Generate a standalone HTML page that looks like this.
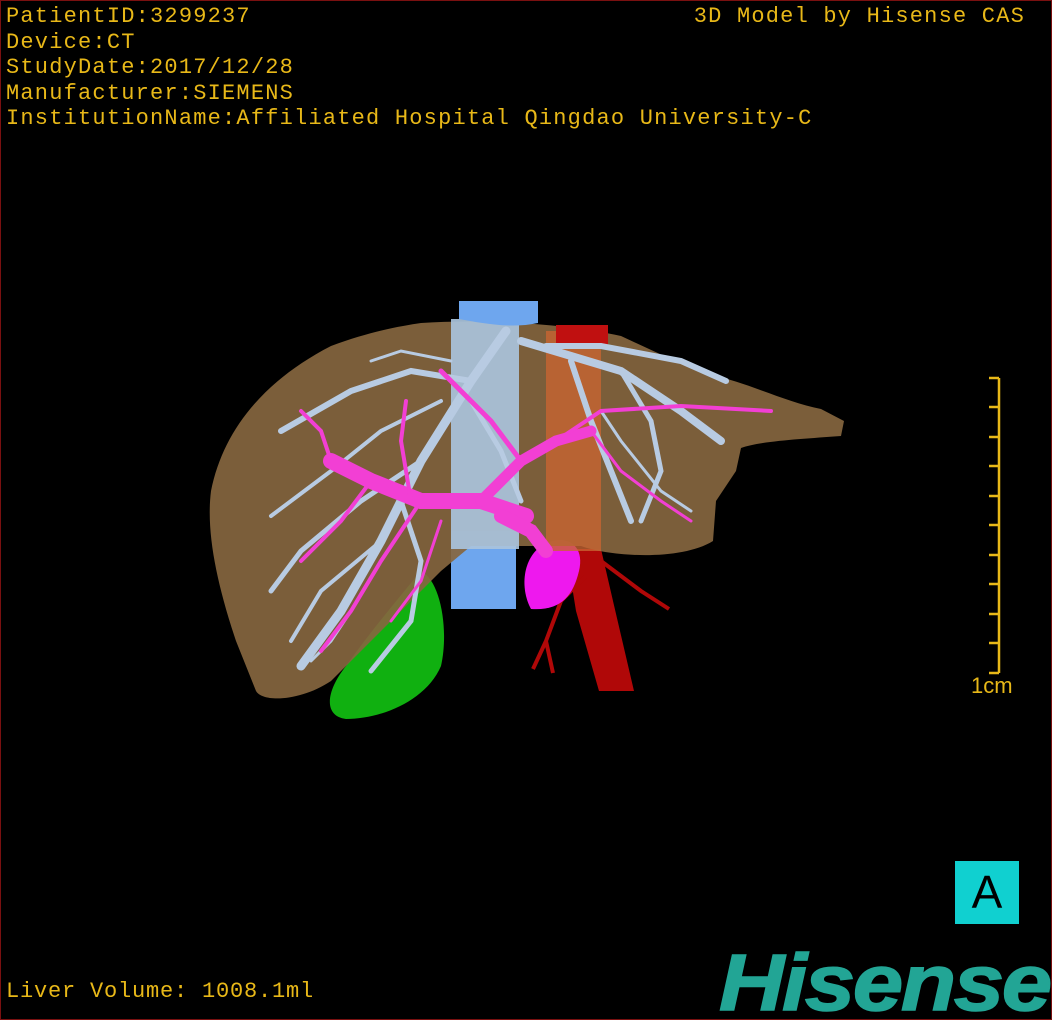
<!DOCTYPE html>
<html><head><meta charset="utf-8"><style>
html,body{margin:0;padding:0;background:#000;}
#w{position:relative;width:1050px;height:1018px;border:1px solid #7a1010;overflow:hidden;background:#000;}
.t{position:absolute;color:#e8b818;font-family:"Liberation Mono",monospace;font-size:22px;letter-spacing:1.2px;white-space:nowrap;line-height:25px;}
#logo{position:absolute;left:718px;top:940px;color:#22a595;font-family:"Liberation Sans",sans-serif;font-weight:bold;font-style:italic;font-size:80px;letter-spacing:-2px;transform:scaleX(1.13);transform-origin:left top;line-height:84px;-webkit-text-stroke:1.5px #22a595;}
#A{position:absolute;left:954px;top:860px;width:64px;height:63px;background:#10d0d0;color:#000;font-family:"Liberation Sans",sans-serif;font-size:46px;text-align:center;line-height:63px;}
</style></head><body><div id="w">
<div class="t" style="left:5px;top:3px">PatientID:3299237</div>
<div class="t" style="left:5px;top:29px">Device:CT</div>
<div class="t" style="left:5px;top:54px">StudyDate:2017/12/28</div>
<div class="t" style="left:5px;top:80px">Manufacturer:SIEMENS</div>
<div class="t" style="left:5px;top:105px">InstitutionName:Affiliated Hospital Qingdao University-C</div>
<div class="t" style="right:26px;top:3px">3D Model by Hisense CAS</div>
<div class="t" style="left:5px;top:978px;letter-spacing:0.8px">Liver Volume: 1008.1ml</div>
<div class="t" style="left:970px;top:672px;letter-spacing:0;font-family:'Liberation Sans',sans-serif">1cm</div>
<svg style="position:absolute;left:0;top:0" width="1050" height="1018" viewBox="0 0 1050 1018">
<g stroke="#e8b818" stroke-width="2.5">
<line x1="998" y1="377" x2="998" y2="672"/>
<line x1="988" y1="377" x2="998" y2="377"/><line x1="988" y1="406" x2="998" y2="406"/><line x1="988" y1="436" x2="998" y2="436"/><line x1="988" y1="465" x2="998" y2="465"/><line x1="988" y1="495" x2="998" y2="495"/><line x1="988" y1="524" x2="998" y2="524"/><line x1="988" y1="554" x2="998" y2="554"/><line x1="988" y1="583" x2="998" y2="583"/><line x1="988" y1="613" x2="998" y2="613"/><line x1="988" y1="642" x2="998" y2="642"/><line x1="988" y1="672" x2="998" y2="672"/>
</g>
<path d="M565 548 L600 548 L612 600 L633 690 L598 690 L575 610 Z" fill="#b00808"/>
<path d="M600 560 L640 590 L668 608 M585 575 L560 600 L545 640 L532 668 M545 640 L552 672" stroke="#b00808" stroke-width="4" fill="none"/>
<rect x="450" y="530" width="65" height="78" fill="#6ea6ee"/>
<path d="M420 570 C440 580 448 630 440 665 C425 700 380 718 345 718 C322 715 325 690 345 665 C370 630 395 600 420 570 Z" fill="#10b010"/>
<path d="M540 545 C560 532 585 540 578 570 C572 595 560 610 530 608 C520 590 520 560 540 545Z" fill="#ee18ee"/>
<path d="M420 322 C480 318 560 322 620 335 L700 372 C740 378 780 400 820 408 L843 420 L840 435 C800 438 760 440 740 447 L735 470 L715 500 L712 540 C680 560 610 556 580 545 L470 545 L440 570 L330 680 C300 700 262 702 255 690 L235 640 C215 580 205 530 210 490 C222 430 262 380 330 345 C370 330 400 325 420 322 Z" fill="#86663f" opacity="0.92"/>
<rect x="545" y="330" width="55" height="220" fill="#c86432" opacity="0.8"/>
<rect x="555" y="324" width="52" height="20" fill="#c01010"/>
<rect x="450" y="318" width="68" height="230" fill="#a9c3dc" opacity="0.92"/>
<path d="M458 300 L537 300 L537 322 C510 328 480 322 458 318 Z" fill="#6ea6ee"/>
<g stroke="#b8cbe2" fill="none" stroke-linecap="round">
<path d="M505 330 L470 380 L420 460 L380 540 L340 610 L300 665" stroke-width="9"/>
<path d="M420 460 L360 500 L300 550 L270 590" stroke-width="5"/>
<path d="M470 380 L410 370 L350 390 L280 430" stroke-width="6"/>
<path d="M440 400 L380 430 L330 470 L270 515" stroke-width="4"/>
<path d="M400 500 L420 560 L410 620 L370 670" stroke-width="5"/>
<path d="M380 540 L320 590 L290 640" stroke-width="4"/>
<path d="M470 400 L500 450 L520 500" stroke-width="5"/>
<path d="M520 340 L570 355 L620 370 L680 410 L720 440" stroke-width="8"/>
<path d="M545 345 L600 345 L680 360 L725 380" stroke-width="6"/>
<path d="M570 360 L590 420 L610 470 L630 520" stroke-width="6"/>
<path d="M620 370 L650 420 L660 470 L640 520" stroke-width="5"/>
<path d="M600 410 L620 440 L660 490 L690 510" stroke-width="3"/>
<path d="M450 360 L400 350 L370 360" stroke-width="3"/>
<path d="M350 610 L330 640 L310 660" stroke-width="3"/>
</g>
<g stroke="#f23fd4" fill="none" stroke-linecap="round">
<path d="M525 515 L480 500 L420 500 L370 480 L330 460" stroke-width="16"/>
<path d="M480 500 L520 460 L555 440 L590 430" stroke-width="11"/>
<path d="M555 440 L600 410 L680 405 L770 410" stroke-width="4"/>
<path d="M520 460 L490 420 L460 390 L440 370" stroke-width="5"/>
<path d="M420 500 L380 560 L350 610 L320 650" stroke-width="4"/>
<path d="M370 480 L340 520 L300 560" stroke-width="4"/>
<path d="M330 460 L320 430 L300 410" stroke-width="4"/>
<path d="M410 500 L400 440 L405 400" stroke-width="4"/>
<path d="M590 430 L620 470 L660 500 L690 520" stroke-width="3"/>
<path d="M440 520 L420 580 L390 620" stroke-width="3"/>
<path d="M500 515 L530 530 L545 550" stroke-width="14"/>
</g>
</svg>
<div id="A">A</div>
<div id="logo">Hisense</div>
</div></body></html>
